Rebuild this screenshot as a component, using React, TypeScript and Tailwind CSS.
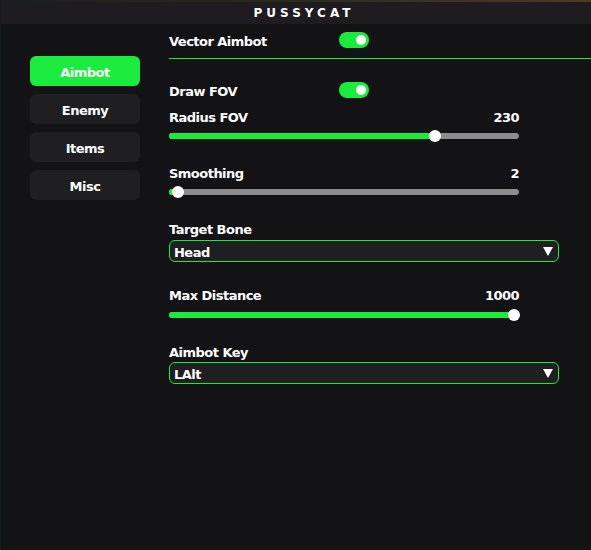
import React from "react";

const GREEN = "bg-[#1aeb3c]";

function Toggle() {
  return (
    <div className="flex h-[16px] w-[30px] items-center justify-end rounded-full bg-[#1aeb3c] pr-[3px]">
      <div className="h-[10px] w-[10px] rounded-full bg-white" />
    </div>
  );
}

function Slider({ knob }: { knob: number }) {
  return (
    <div className="relative flex h-[12px] w-[350px] items-center">
      <div className="relative h-[6px] w-full overflow-hidden rounded-full bg-[#8c8c8c]">
        <div className={`h-full ${GREEN}`} style={{ width: knob }} />
      </div>
      <div
        className="absolute top-0 h-[12px] w-[12px] rounded-full bg-white"
        style={{ left: knob - 6 }}
      />
    </div>
  );
}

function Select({ value }: { value: string }) {
  return (
    <div className="flex h-[22px] w-[390px] items-center justify-between rounded-[6px] border border-[#1aeb3c] bg-[#1f1f21] pl-[4px] pr-[5px]">
      <span className="pt-[3px] leading-[16px]">{value}</span>
      <svg width="10" height="9" viewBox="0 0 10 9">
        <polygon points="0,0 10,0 5,9" fill="white" />
      </svg>
    </div>
  );
}

function SideButton({ label, active }: { label: string; active?: boolean }) {
  return (
    <div
      className={`flex h-[30px] w-[110px] items-center justify-center rounded-[6px] pt-[4px] ${
        active ? "bg-[#1aeb3c]" : "bg-[#1f1f21]"
      }`}
    >
      {label}
    </div>
  );
}

export default function App() {
  return (
    <div className="flex h-[550px] w-[591px] flex-col overflow-hidden border-l border-[#0f1c19] bg-[#131316] font-['DejaVu_Sans',sans-serif] text-[13px] font-bold tracking-[-0.04em] text-white">
      <div className="h-[2px] w-full bg-gradient-to-r from-[#1a1f1b] via-[#2c2a20] to-[#4d3c22]" />
      <div className="flex h-[22px] items-center justify-center bg-[#1e1c20] pl-[16px] text-[12px] tracking-[4px]">
        PUSSYCAT
      </div>
      <div className="flex flex-1">
        <div className="flex w-[168px] flex-col gap-[8px] pl-[29px] pt-[32px]">
          <SideButton label="Aimbot" active />
          <SideButton label="Enemy" />
          <SideButton label="Items" />
          <SideButton label="Misc" />
        </div>
        <div className="flex flex-1 flex-col">
          <div className="mt-[8px] flex h-[16px] items-center">
            <span className="w-[170px] pt-[4px] leading-[16px]">Vector Aimbot</span>
            <Toggle />
          </div>
          <div className={`mt-[10px] h-px w-full ${GREEN}`} />
          <div className="mt-[23px] flex h-[16px] items-center">
            <span className="w-[170px] pt-[4px] leading-[16px]">Draw FOV</span>
            <Toggle />
          </div>

          <div className="mt-[12px] flex h-[16px] w-[350px] items-center justify-between leading-[16px]">
            <span>Radius FOV</span>
            <span>230</span>
          </div>
          <div className="mt-[4px]">
            <Slider knob={266} />
          </div>

          <div className="mt-[24px] flex h-[16px] w-[350px] items-center justify-between leading-[16px]">
            <span>Smoothing</span>
            <span>2</span>
          </div>
          <div className="mt-[4px]">
            <Slider knob={9} />
          </div>

          <div className="mt-[24px] flex h-[16px] items-center leading-[16px]">
            <span>Target Bone</span>
          </div>
          <div className="mt-[2px]">
            <Select value="Head" />
          </div>

          <div className="mt-[26px] flex h-[16px] w-[350px] items-center justify-between leading-[16px]">
            <span>Max Distance</span>
            <span>1000</span>
          </div>
          <div className="mt-[5px]">
            <Slider knob={345} />
          </div>

          <div className="mt-[24px] flex h-[16px] items-center leading-[16px]">
            <span>Aimbot Key</span>
          </div>
          <div className="mt-[1px]">
            <Select value="LAlt" />
          </div>
        </div>
      </div>
    </div>
  );
}
